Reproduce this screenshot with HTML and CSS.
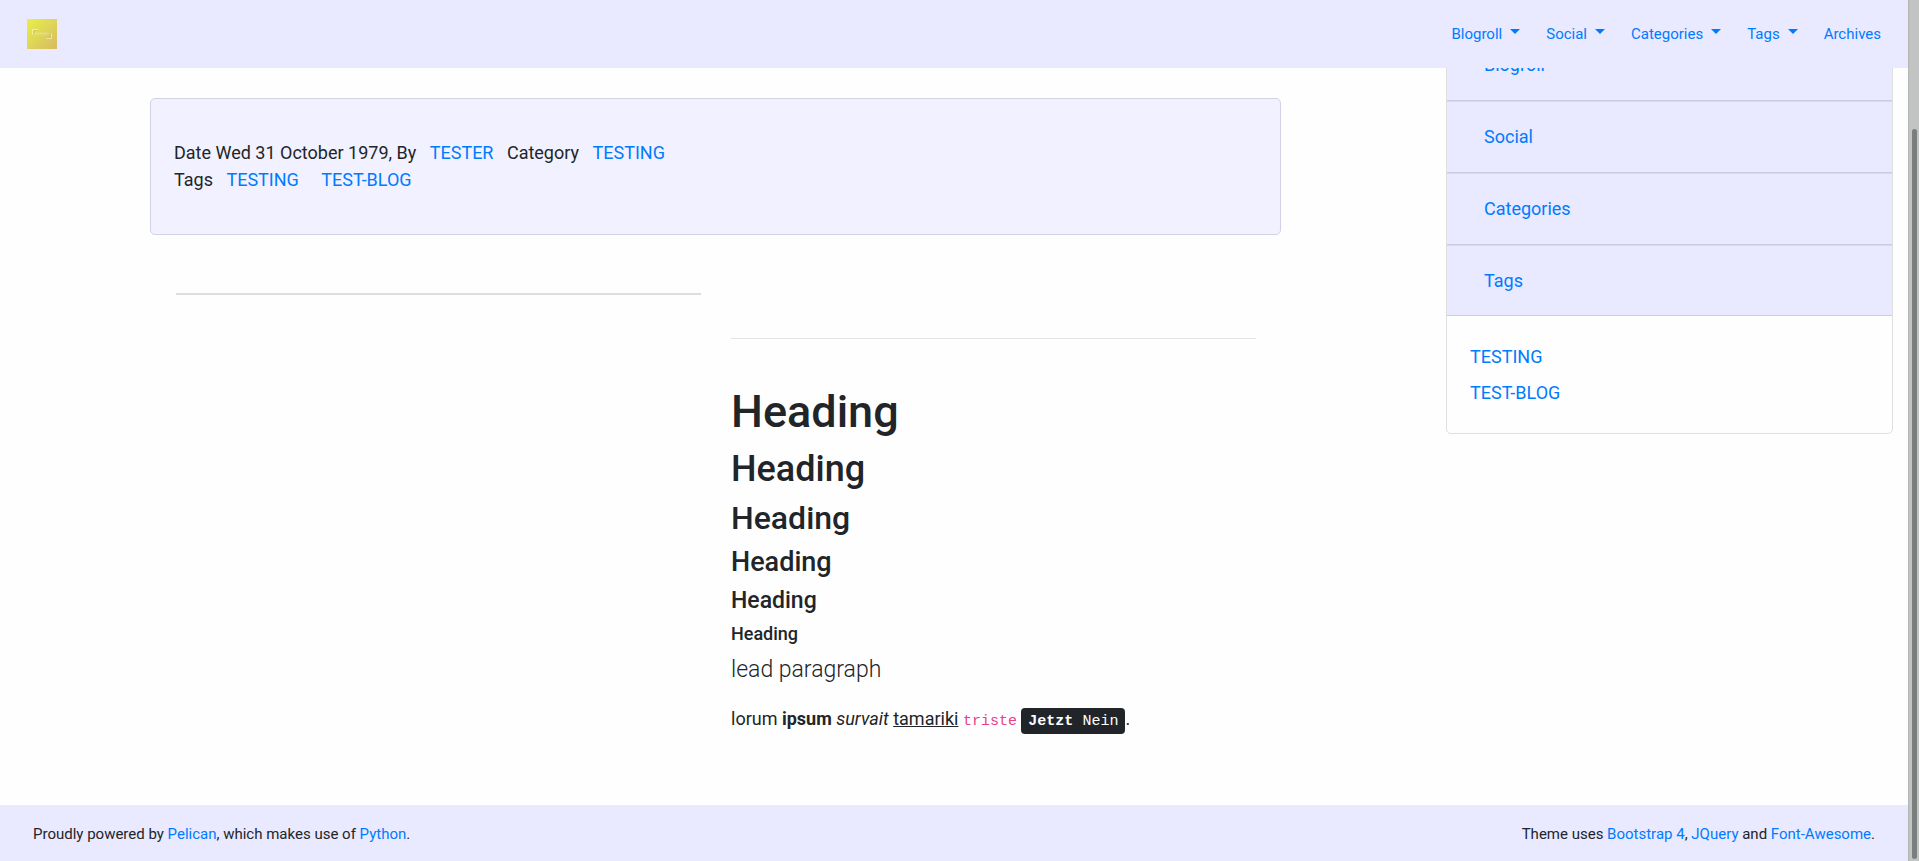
FILE: index.html
```html
<!DOCTYPE html>
<html lang="en">
<head>
<meta charset="utf-8">
<title>Test blog</title>
<link rel="stylesheet" href="styles.css">
</head>
<body>
<div class="page">
  <header class="navbar">
    <a class="brand" href="#" aria-label="Home">
      <svg width="30" height="30" viewBox="0 0 30 30" aria-hidden="true">
        <defs>
          <linearGradient id="gold" x1="0" y1="0" x2="1" y2="1">
            <stop offset="0" stop-color="#e8f046"/>
            <stop offset=".5" stop-color="#dfd558"/>
            <stop offset="1" stop-color="#d8ba60"/>
          </linearGradient>
        </defs>
        <rect width="30" height="30" fill="url(#gold)"/>
        <path d="M5.500 15.500V10.500H10.500" fill="none" stroke="#f2f2a8"/>
        <path d="M24.500 14.500V19.500H19.500" fill="none" stroke="#eee6b4"/>
        <path d="M6.500 15V11.500H10M23.500 15V18.500H20" fill="none" stroke="#c9bd62" stroke-opacity=".7"/>
        <path d="M8.500 14.500H21.500" fill="none" stroke="#f3efb8" stroke-width="2" stroke-opacity=".5" stroke-dasharray="1.500 .5"/>
      </svg>
    </a>
    <nav class="menu">
      <button class="menu-item" type="button">Blogroll<span class="caret"></span></button>
      <button class="menu-item" type="button">Social<span class="caret"></span></button>
      <button class="menu-item" type="button">Categories<span class="caret"></span></button>
      <button class="menu-item" type="button">Tags<span class="caret"></span></button>
      <a class="menu-item" href="#">Archives</a>
    </nav>
  </header>
  <div class="columns">
    <main class="content">
      <section class="meta">
        <p>Date Wed 31 October 1979, By <a class="term" href="#">TESTER</a> Category <a class="term" href="#">TESTING</a><br>
        Tags <a class="term" href="#">TESTING</a> <a class="term" href="#">TEST-BLOG</a></p>
      </section>
      <article class="article">
        <div><hr class="rule-thick"></div>
        <div class="body">
          <hr class="rule">
          <h1>Heading</h1>
          <h2>Heading</h2>
          <h3>Heading</h3>
          <h4>Heading</h4>
          <h5>Heading</h5>
          <h6>Heading</h6>
          <p class="lead">lead paragraph</p>
          <p>lorum <strong>ipsum</strong> <em>survait</em> <u>tamariki</u> <code>triste</code> <kbd><b>Jetzt</b> Nein</kbd>.</p>
        </div>
      </article>
    </main>
    <aside class="sidebar">
      <div class="accordion">
        <button class="fold" type="button">Blogroll</button>
        <button class="fold" type="button">Social</button>
        <button class="fold" type="button">Categories</button>
        <button class="fold fold-open" type="button">Tags</button>
        <div class="fold-body">
          <a href="#">TESTING</a>
          <a href="#">TEST-BLOG</a>
        </div>
      </div>
    </aside>
  </div>
  <footer class="footer">
    <span>Proudly powered by <a href="#">Pelican</a>, which makes use of <a href="#">Python</a>.</span>
    <span>Theme uses <a href="#">Bootstrap 4</a>, <a href="#">JQuery</a> and <a href="#">Font-Awesome</a>.</span>
  </footer>
</div>
<div class="track"><div class="thumb"></div></div>
</body>
</html>
```

FILE: styles.css
```css
* { box-sizing: border-box; }

body {
  margin: 0;
  min-height: 100vh;
  display: grid;
  grid-template-columns: minmax(0, 1fr) 11px;
  background: #fefefe;
  color: #212529;
  font: 18px/27px Roboto, "Liberation Sans", sans-serif;
}

a { color: #007bff; text-decoration: none; }
button { border: 0; background: none; color: #007bff; font: inherit; cursor: pointer; }
p { margin: 0 0 18px; }

.page { display: flex; flex-direction: column; }

.navbar {
  position: relative;
  z-index: 1;
  display: flex;
  align-items: center;
  justify-content: space-between;
  height: 68px;
  padding: 0 27px;
  background: #e9e9ff;
}
.brand svg { display: block; }
.menu { display: flex; gap: 26px; font-size: 15px; }
.menu-item { display: flex; align-items: center; padding: 0; }
.caret {
  margin: 0 0 5px 8px;
  border: 5px solid transparent;
  border-top-color: currentColor;
  border-bottom: 0;
}

.columns { flex: 1; display: grid; grid-template-columns: 3fr 1fr; }

.content { padding: 30px 150px 0; }
.meta {
  padding: 40px 23px 23px;
  border: 1px solid #d2d2e6;
  border-radius: 5px;
  background: #f2f1ff;
}
.term { padding: 0 9px; }

.article {
  display: grid;
  grid-template-columns: 1fr 1fr;
  gap: 30px;
  padding: 58px 25px 0 26px;
}
hr { margin: 0; border: 0; }
.rule-thick { border-top: 2px solid #dedede; }
.rule { margin: 45px 0 46px; border-top: 1px solid #e4e4e4; }

h1, h2, h3, h4, h5, h6 { margin: 0 0 9px; font-weight: 500; }
h1 { font-size: 45px; line-height: 54px; }
h2 { font-size: 36px; line-height: 43px; }
h3 { font-size: 32px; line-height: 37px; }
h4 { font-size: 27px; line-height: 32px; }
h5 { font-size: 23px; line-height: 27px; }
h6 { font-size: 18px; line-height: 21px; }
.lead { font-size: 23px; line-height: 34px; font-weight: 300; }

code, kbd { font-family: "Liberation Mono", monospace; font-size: 15px; }
code { color: #e83e8c; }
kbd { padding: 5px 7px 4px; border-radius: 4px; background: #212529; color: #fff; }

.sidebar { padding: 0 15px; }
.accordion {
  margin-top: -40px;
  border: 1px solid #dfdfdf;
  border-radius: 5px;
}
.fold {
  display: block;
  width: 100%;
  height: 72px;
  padding: 0 37px 1px;
  border: 0 solid #cdcde2;
  border-width: 1px 0;
  border-top-color: #d9d9e4;
  background: #e9e9ff;
  text-align: left;
}
.fold-open { height: 71px; }
.fold-body { display: grid; padding: 23px 23px 22px; line-height: 36px; }

.footer {
  display: flex;
  align-items: center;
  justify-content: space-between;
  height: 56px;
  padding: 2px 33px 0;
  background: #e9e9ff;
  font-size: 15px;
}

.track { padding: 129px 2px 2px 3px; border-left: 1px solid #b4b6b5; background: #c2c4c3; }
.thumb { height: 100%; border-radius: 3px; background: #7a7e7d; }
```
